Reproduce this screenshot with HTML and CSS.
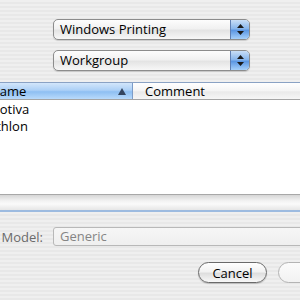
FILE: index.html
```html
<!DOCTYPE html>
<html>
<head>
  <title>Add Printer</title>
  <link rel="stylesheet" href="styles.css">
</head>
<body>
  <div class="popups">
    <div class="popup">
      <span class="popup-label">Windows Printing</span>
      <span class="popup-arrows">
        <svg width="7" height="11" viewBox="0 0 7 11"><path d="M3.5 0 L7 4 L0 4 Z M0 7 L7 7 L3.5 11 Z" fill="#1a1a1a"/></svg>
      </span>
    </div>
    <div class="popup">
      <span class="popup-label">Workgroup</span>
      <span class="popup-arrows">
        <svg width="7" height="11" viewBox="0 0 7 11"><path d="M3.5 0 L7 4 L0 4 Z M0 7 L7 7 L3.5 11 Z" fill="#1a1a1a"/></svg>
      </span>
    </div>
  </div>

  <div class="browser">
    <div class="list-head">
      <div class="col col-name">
        <span>Name</span>
        <svg class="sort" width="8" height="7" viewBox="0 0 8 7"><path d="M4 0 L8 7 L0 7 Z" fill="#34455f"/></svg>
      </div>
      <div class="col col-comment">Comment</div>
    </div>
    <div class="list-body">
      <div class="row">Motiva</div>
      <div class="row">Athlon</div>
    </div>
    <div class="list-track"></div>
  </div>

  <div class="model-row">
    <span class="model-label">Model:</span>
    <div class="field">Generic</div>
  </div>

  <div class="buttons">
    <button class="btn">Cancel</button>
    <button class="btn disabled">Add</button>
  </div>
</body>
</html>
```

FILE: styles.css
```css
html, body {
  margin: 0;
  overflow: hidden;
}

body {
  width: 300px;
  height: 300px;
  font-family: 'Open Sans', 'DejaVu Sans', sans-serif;
  font-size: 13px;
  color: #000;
  background: repeating-linear-gradient(#efefef 0 2px, #e8e8e8 2px 4px);
}

.popups {
  display: flex;
  flex-direction: column;
  gap: 10px;
  padding: 19px 0 0 53px;
}

.popup {
  display: flex;
  width: 197px;
  height: 21px;
  box-sizing: border-box;
  border: 1px solid #8c8c8c;
  border-radius: 5px;
  background: linear-gradient(#fdfdfd, #f1f1f1 45%, #e4e4e4 55%, #f7f7f7);
  box-shadow: 0 1px 1px rgba(0, 0, 0, 0.15);
  overflow: hidden;
}

.popup-label {
  flex: 1;
  padding-left: 6px;
  line-height: 19px;
}

.popup-arrows {
  width: 18px;
  display: flex;
  align-items: center;
  justify-content: center;
  border-left: 1px solid #5f7fb3;
  background: linear-gradient(#c9def6, #88b6ec 45%, #5c97e3 55%, #a6d0fa);
}

.browser {
  margin: 11px 0 0 -12px;
  border-top: 1px solid #8aa2c4;
}

.list-head {
  display: flex;
  height: 16px;
  border-bottom: 1px solid #a4a4a4;
  line-height: 17px;
}

.col {
  box-sizing: border-box;
}

.col-name {
  width: 145px;
  display: flex;
  align-items: center;
  padding: 0 6px 0 2px;
  border-right: 1px solid #7c9cc8;
  background: linear-gradient(#d3e6fb, #acd0f6 45%, #8ebff2 55%, #b9dafb);
}

.col-name span {
  flex: 1;
}

.col-comment {
  flex: 1;
  padding-left: 12px;
  background: linear-gradient(#ffffff, #f4f4f4 50%, #e9e9e9 55%, #f6f6f6);
}

.list-body {
  height: 94px;
  background: #fff;
}

.row {
  height: 17px;
  line-height: 18px;
}

.list-track {
  height: 15px;
  border-top: 1px solid #a8a8a8;
  border-bottom: 2px solid #9dbbe0;
  background: linear-gradient(#d6d6d6, #f3f3f3 40%, #fafafa 60%, #e6e6e6);
}

.model-row {
  display: flex;
  align-items: center;
  margin-top: 15px;
  gap: 10px;
}

.model-label {
  width: 43px;
  text-align: right;
  color: #6a6a6a;
}

.field {
  flex: 1;
  height: 19px;
  box-sizing: border-box;
  margin-right: -20px;
  padding-left: 6px;
  line-height: 17px;
  color: #858585;
  border: 1px solid #b8b8b8;
  border-radius: 3px;
  background: linear-gradient(#f6f6f6, #efefef);
}

.buttons {
  display: flex;
  gap: 11px;
  margin-top: 16px;
  padding-left: 198px;
}

.btn {
  flex: none;
  width: 69px;
  height: 21px;
  padding: 0;
  font: inherit;
  color: #000;
  border: 1px solid #6a6a6a;
  border-radius: 11px;
  background: linear-gradient(#ffffff, #f2f2f2 45%, #dedede 55%, #f8f8f8);
  box-shadow: 0 1px 1px rgba(0, 0, 0, 0.2);
}

.btn.disabled {
  color: #9a9a9a;
  border-color: #b4b4b4;
  background: linear-gradient(#fbfbfb, #f2f2f2);
  box-shadow: none;
}
```
